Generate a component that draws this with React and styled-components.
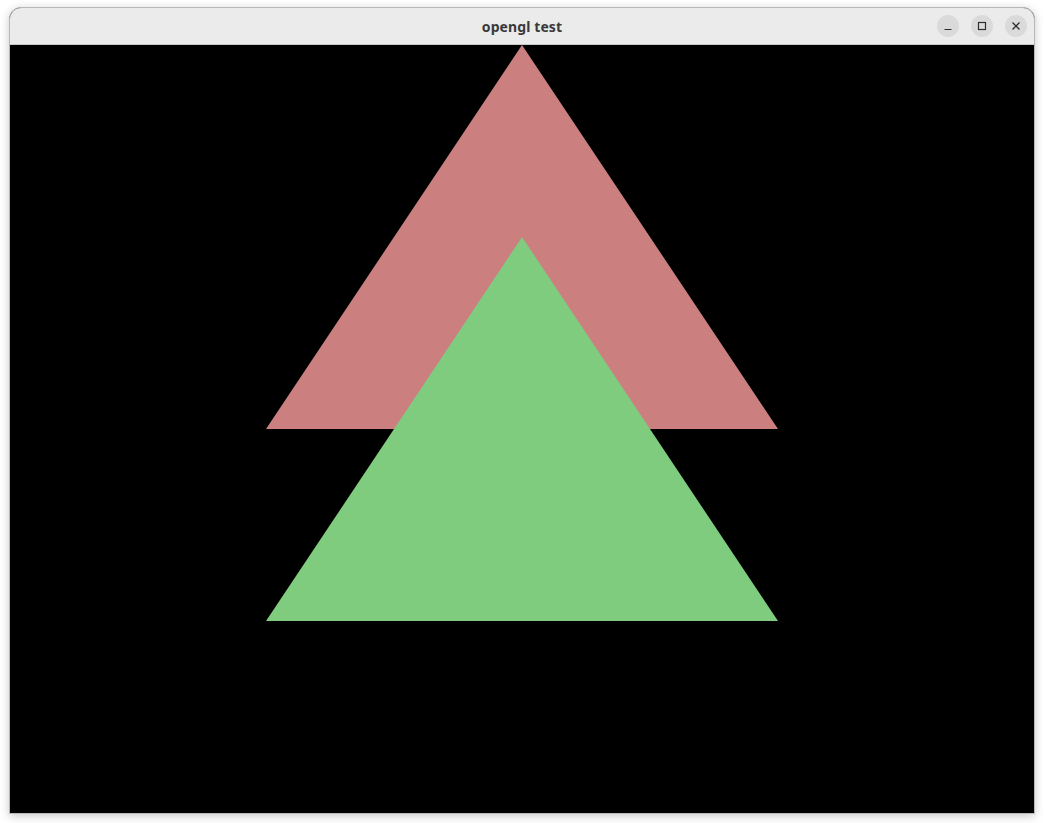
import React from "react";
import styled, { createGlobalStyle } from "styled-components";

const Global = createGlobalStyle`
  html, body {
    margin: 0;
    padding: 0;
    background: #ffffff;
  }
  body {
    font-family: "Noto Sans", "Open Sans", "DejaVu Sans", sans-serif;
  }
`;

const Desktop = styled.div`
  width: 1044px;
  height: 823px;
  padding: 7px 0 0 9px;
  box-sizing: border-box;
  overflow: hidden;
`;

const Window = styled.div`
  width: 1024px;
  border: 1px solid #b9b9b9;
  border-radius: 12px 12px 0 0;
  box-shadow: 0 2px 10px rgba(0, 0, 0, 0.22);
  overflow: hidden;
  background: #000;
`;

const TitleBar = styled.div`
  position: relative;
  height: 36px;
  background: #ebebeb;
  border-bottom: 1px solid #c8c8c8;
  display: flex;
  align-items: center;
  justify-content: center;
`;

const Title = styled.span`
  font-size: 14px;
  font-weight: 700;
  color: #3a3a3a;
  letter-spacing: 0.1px;
`;

const Controls = styled.div`
  position: absolute;
  right: 7px;
  top: 7px;
  display: flex;
  gap: 12px;
`;

const CtrlButton = styled.div`
  width: 22px;
  height: 22px;
  border-radius: 50%;
  background: #dadada;
  display: flex;
  align-items: center;
  justify-content: center;
  color: #2e2e2e;
`;

const Canvas = styled.svg`
  display: block;
  width: 1024px;
  height: 768px;
  background: #000;
`;

const App = () => {
  return (
    <Desktop>
      <Global />
      <Window>
        <TitleBar>
          <Title>opengl test</Title>
          <Controls>
            <CtrlButton>
              <svg width="12" height="12" viewBox="0 0 12 12">
                <path d="M2.5 9.5h7" stroke="currentColor" strokeWidth="1.2" />
              </svg>
            </CtrlButton>
            <CtrlButton>
              <svg width="12" height="12" viewBox="0 0 12 12">
                <rect x="2.5" y="2.5" width="7" height="7" fill="none" stroke="currentColor" strokeWidth="1.2" />
              </svg>
            </CtrlButton>
            <CtrlButton>
              <svg width="12" height="12" viewBox="0 0 12 12">
                <path d="M2.5 2.5l7 7M9.5 2.5l-7 7" stroke="currentColor" strokeWidth="1.3" />
              </svg>
            </CtrlButton>
          </Controls>
        </TitleBar>
        <Canvas viewBox="0 0 1024 768">
          <polygon points="512,0 256,384 768,384" fill="#cc7f7f" />
          <polygon points="512,192 256,576 768,576" fill="#7fcc7f" />
        </Canvas>
      </Window>
    </Desktop>
  );
};

export default App;
